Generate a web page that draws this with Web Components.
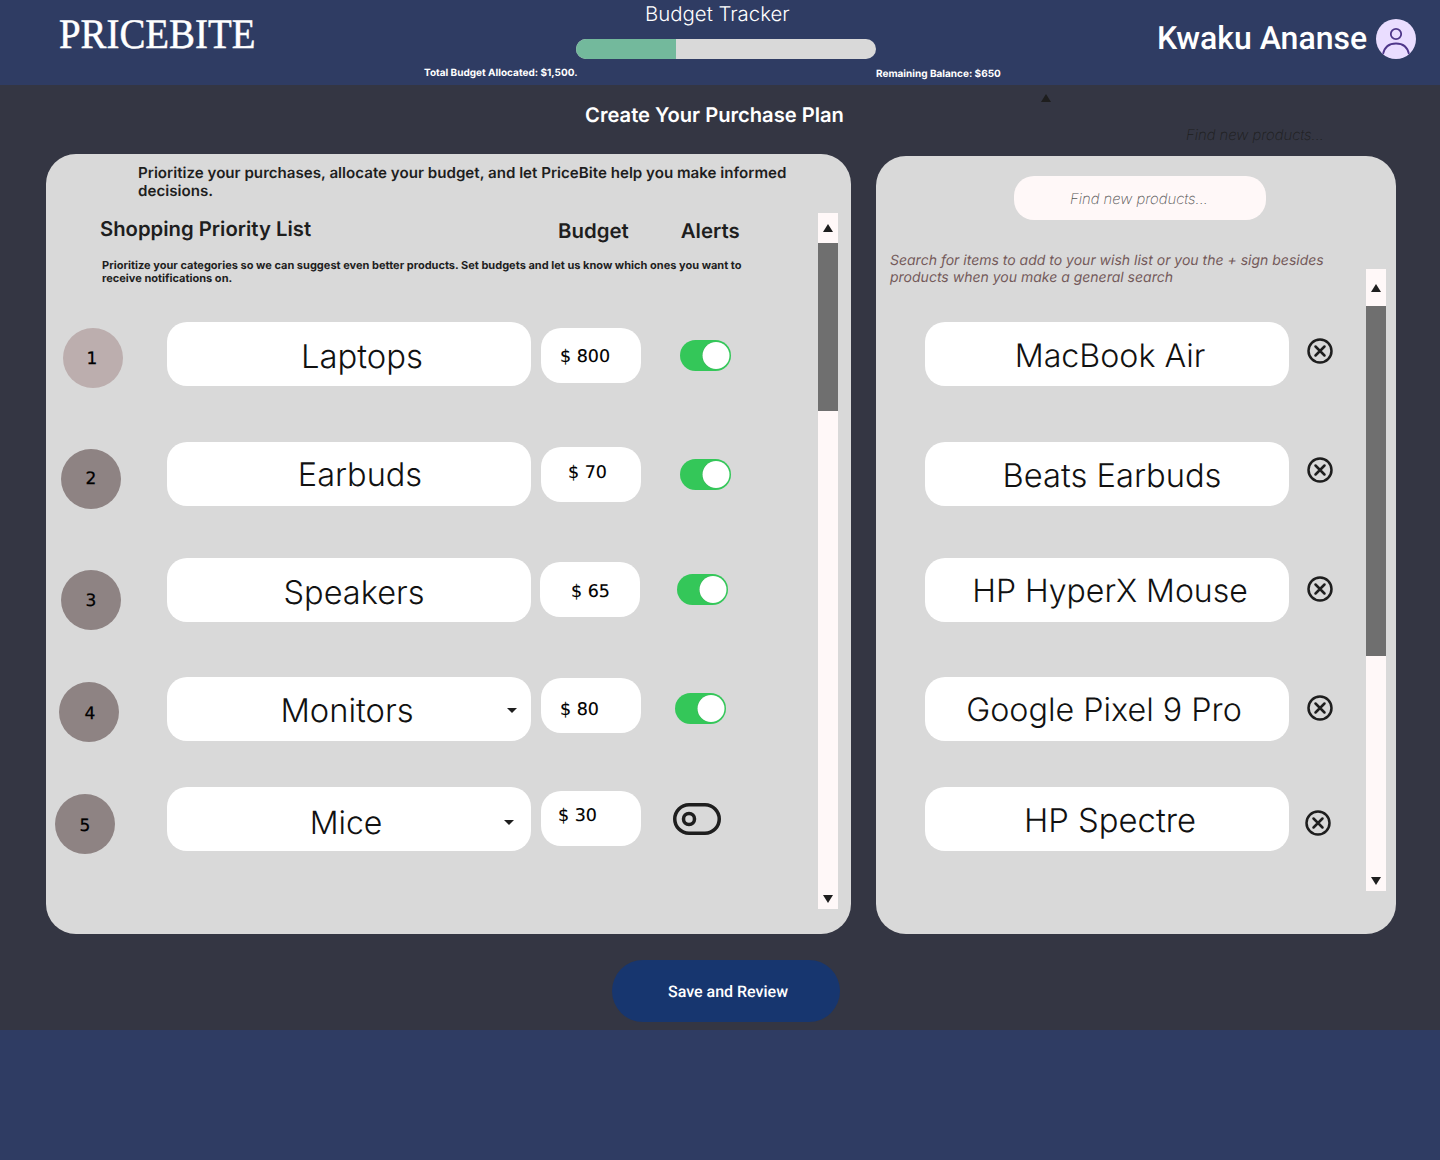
<!DOCTYPE html>
<html lang="en">
<head>
<meta charset="utf-8">
<title>PriceBite</title>
<style>
html,body{margin:0;padding:0;background:#2f3c63;font-family:Inter,"Liberation Sans",sans-serif;text-rendering:geometricPrecision;}
body{width:1440px;height:1160px;overflow:hidden;}
</style>
</head>
<body>
<pb-app>
  <pb-header slot="header"></pb-header>
  <pb-priority-card slot="left">
    <pb-priority-row rank="1" tone="light" amount="$ 800" fs="32.8" cx="17" cy="6" nx="-1" ny="1" tx="13" ty="2" bx="10" by="6" ax="39" ay="18" sw="on" gap="0" amt-pad="19" amt-y="1">Laptops</pb-priority-row>
    <pb-priority-row rank="2" amount="$ 70" fs="32.5" cx="15" cy="7" nx="0" ny="0" tx="11" ty="1" bx="10" by="5" ax="39" ay="17" sw="on" gap="56" amt-pad="27" amt-y="-2">Earbuds</pb-priority-row>
    <pb-priority-row rank="3" amount="$ 65" fs="32.5" cx="15" cy="12" nx="0" ny="1" tx="5" ty="3" bx="9" by="4" ax="37" ay="16" sw="on" gap="52" amt-pad="31" amt-y="2">Speakers</pb-priority-row>
    <pb-priority-row rank="4" amount="$ 80" fs="32.7" cx="13" cy="5" nx="1" ny="2" tx="-2" ty="1" bx="10" by="1" ax="34" ay="16" sw="on" gap="55" amt-pad="19" amt-y="4" caret="340" caret-y="31">Monitors</pb-priority-row>
    <pb-priority-row rank="5" amount="$ 30" fs="32" cx="9" cy="7" nx="0" ny="2" tx="-3" ty="4" bx="10" by="4" ax="32" ay="16" sw="off" gap="46" amt-pad="17" amt-y="-3" caret="337" caret-y="33">Mice</pb-priority-row>
  </pb-priority-card>
  <pb-wish-card slot="right">
    <pb-wish-row gap="0" tx="3" ty="2" iy="16" ix="18" fs="32.2">MacBook Air</pb-wish-row>
    <pb-wish-row gap="56" tx="5" ty="1" iy="15" ix="18" fs="32.7">Beats Earbuds</pb-wish-row>
    <pb-wish-row gap="52" tx="3" ty="1" iy="18" ix="18" fs="32">HP HyperX Mouse</pb-wish-row>
    <pb-wish-row gap="55" tx="-3" ty="1" iy="18" ix="18" fs="32.3">Google Pixel 9 Pro</pb-wish-row>
    <pb-wish-row gap="46" tx="3" ty="1" iy="23" ix="16" fs="32.8">HP Spectre</pb-wish-row>
  </pb-wish-card>
</pb-app>
<script>
function def(name, css, html){
  customElements.define(name, class extends HTMLElement{
    connectedCallback(){
      if(this.shadowRoot) return;
      const r=this.attachShadow({mode:'open'});
      r.innerHTML='<style>'+css+'</style>'+(typeof html==='function'?html(this):html);
    }
  });
}
const TRI_UP='<svg width="10" height="8" viewBox="0 0 10 8"><path d="M5 0 10 8H0Z" fill="#1e1e1e"/></svg>';
const TRI_DOWN='<svg width="10" height="8" viewBox="0 0 10 8"><path d="M0 0H10L5 8Z" fill="#1e1e1e"/></svg>';
function shift(tx,ty){
  return (tx>=0?'padding-left:'+(tx*2):'padding-right:'+(-tx*2))+'px;'+(ty>=0?'padding-top:'+(ty*2):'padding-bottom:'+(-ty*2))+'px;';
}

def('pb-app',`
  :host{display:block;width:1440px;height:1160px;position:relative;}
  main{display:block;height:945px;background:#343643;box-sizing:border-box;padding-top:18px;}
  h1{margin:0 0 27px;font:600 20.160px/24px Inter,sans-serif;color:#fff;text-align:center;width:1429px;}
  .cards{display:flex;align-items:flex-start;gap:25px;padding-left:46px;}
  .save{display:flex;align-items:center;justify-content:center;box-sizing:border-box;width:228px;height:62px;margin:26px 0 0 612px;padding:2px 0 0 4px;border-radius:31px;background:#17366f;color:#fff;font:500 16px/20px Roboto,sans-serif;}
  .stray-tri{position:absolute;left:1041px;top:94px;line-height:0;}
  .stray-find{position:absolute;left:1186px;top:127px;font:italic 200 14.800px/17px Inter,sans-serif;color:#1e1e1e;}
`,`
  <slot name="header"></slot>
  <main>
    <h1>Create Your Purchase Plan</h1>
    <div class="cards"><slot name="left"></slot><slot name="right"></slot></div>
    <div class="save">Save and Review</div>
  </main>
  <div class="stray-tri">${TRI_UP}</div>
  <div class="stray-find">Find new products...</div>
`);

def('pb-header',`
  :host{display:flex;height:85px;background:#2f3c63;color:#fff;position:relative;}
  .logo{width:424px;box-sizing:border-box;padding:13px 0 0 59px;}
  .logo span{display:inline-block;font:400 42px/44px "Liberation Serif",serif;-webkit-text-stroke:.5px #fff;transform:scaleX(.925);transform-origin:0 50%;white-space:nowrap;}
  .tracker{width:733px;flex:none;display:grid;grid-template-columns:152px 300px 1fr;grid-template-rows:39px 20px auto;}
  .title{grid-column:1/4;padding-left:221px;font:300 20.400px/28px Inter,sans-serif;white-space:nowrap;}
  .bar{grid-column:2;grid-row:2;background:#d9d9d9;border-radius:10px;overflow:hidden;}
  .bar i{display:block;width:100px;height:100%;background:#73b99c;}
  .note{font:700 10px/12px Inter,sans-serif;white-space:nowrap;}
  .n1{grid-column:1/3;grid-row:3;margin-top:8px;}
  .n2{grid-column:3;grid-row:3;margin-top:9px;}
  .user{flex:1;display:flex;align-items:flex-start;gap:9px;padding-top:19px;}
  .user span{display:block;width:210px;font:500 32px/38px Roboto,sans-serif;white-space:nowrap;}
  svg{display:block;flex:none;}
`,`
  <div class="logo"><span>PRICEBITE</span></div>
  <div class="tracker">
    <div class="title">Budget Tracker</div>
    <div class="bar"><i></i></div>
    <div class="note n1">Total Budget Allocated: $1,500.</div>
    <div class="note n2">Remaining Balance: $650</div>
  </div>
  <div class="user"><span>Kwaku Ananse</span>
    <svg width="40" height="40" viewBox="0 0 40 40"><defs><clipPath id="c"><circle cx="20" cy="20" r="20"/></clipPath></defs>
      <circle cx="20" cy="20" r="20" fill="#eaddff"/>
      <g clip-path="url(#c)" fill="none" stroke="#4f378a" stroke-width="1.800"><circle cx="20" cy="15" r="5.200"/><path d="M7 35C8.500 28 13 24.500 20 24.500S31.500 28 33 35"/></g>
    </svg>
  </div>
`);

def('pb-rail',`
  :host{display:flex;flex-direction:column;align-items:center;width:20px;flex:none;background:#fff8f8;box-sizing:border-box;height:var(--h);margin-top:var(--top);}
  .up{height:var(--uph);flex:none;width:100%;display:flex;align-items:center;justify-content:center;}
  .thumb{width:100%;height:var(--th);flex:none;background:#6f6f6f;}
  .fill{flex:1;}
  .down{height:20px;flex:none;display:flex;align-items:center;justify-content:center;}
`,`<div class="up">${TRI_UP}</div><div class="thumb"></div><div class="fill"></div><div class="down">${TRI_DOWN}</div>`);

def('pb-priority-card',`
  :host{display:flex;width:805px;height:780px;flex:none;background:#d9d9d9;border-radius:30px;color:#1e1e1e;}
  .col{width:772px;flex:none;}
  .intro{margin:10px 0 0 92px;width:660px;font:600 15.140px/18px Inter,sans-serif;}
  .heads{display:flex;align-items:flex-start;margin:17px 0 0 54px;font:600 20.400px/24px Inter,sans-serif;white-space:nowrap;}
  .heads span:first-child{font-size:20.300px;}
  .heads .b{margin:2px 0 0 247px;}
  .heads .a{margin:2px 0 0 52px;}
  .small{margin:16px 0 37px 56px;width:650px;font:700 11.020px/13px Inter,sans-serif;}
  pb-rail{--h:696px;--top:59px;--uph:30px;--th:168px;}
`,`
  <div class="col">
    <div class="intro">Prioritize your purchases, allocate your budget, and let PriceBite help you make informed decisions.</div>
    <div class="heads"><span>Shopping Priority List</span><span class="b">Budget</span><span class="a">Alerts</span></div>
    <div class="small">Prioritize your categories so we can suggest even better products. Set budgets and let us know which ones you want to receive notifications on.</div>
    <slot></slot>
  </div>
  <pb-rail></pb-rail>
`);

def('pb-priority-row',`
  :host{display:flex;height:64px;align-items:flex-start;}
  .slotc{width:121px;flex:none;}
  .c{width:60px;height:60px;border-radius:50%;background:#8e8383;display:flex;align-items:center;justify-content:center;box-sizing:border-box;font:400 17px/20px "DejaVu Sans",sans-serif;-webkit-text-stroke:.25px #000;color:#000;}
  .c.light{background:#bcaeae;}
  .pill{width:364px;height:64px;flex:none;background:#fff;border-radius:20px;display:flex;align-items:center;justify-content:center;font-family:Inter,sans-serif;font-weight:350;line-height:40px;color:#111;box-sizing:border-box;position:relative;}
  .caret{position:absolute;width:0;height:0;border:5px solid transparent;border-top:5px solid #1e1e1e;border-bottom:0;}
  .b{width:100px;height:55px;flex:none;background:#fff;border-radius:20px;box-sizing:border-box;display:flex;align-items:center;font:400 17.500px/22px "DejaVu Sans",sans-serif;-webkit-text-stroke:.15px #000;color:#000;white-space:nowrap;}
  pb-switch{flex:none;}
`,h=>{
  const a=n=>h.getAttribute(n);
  h.style.marginTop=(a('gap')||0)+'px';
  const caret=a('caret')?`<i class="caret" style="left:${a('caret')}px;top:${a('caret-y')}px"></i>`:'';
  return `<div class="slotc"><div class="c ${a('tone')==='light'?'light':''}" style="margin:${a('cy')}px 0 0 ${a('cx')}px;${+a('nx')<0?'padding-right:'+(-a('nx')*2)+'px;':'padding-left:'+(a('nx')*2)+'px;'}padding-top:${a('ny')*2}px">${a('rank')}</div></div>
  <div class="pill" style="font-size:${a('fs')}px;${shift(+a('tx'),+a('ty'))}"><slot></slot>${caret}</div>
  <div class="b" style="margin:${a('by')}px 0 0 ${a('bx')}px;padding-left:${a('amt-pad')}px;${shift(0,+a('amt-y')).replace('padding-left:0px;','')}">${a('amount')}</div>
  <pb-switch state="${a('sw')}" style="margin:${a('ay')}px 0 0 ${a('ax')}px"></pb-switch>`;
});

def('pb-switch',`
  :host{display:block;line-height:0;}
  svg{display:block;}
`,h=>h.getAttribute('state')==='off'
  ?`<svg width="48" height="32" viewBox="0 0 48 32" fill="none" stroke="#1e1e1e" stroke-width="3.500"><rect x="1.750" y="1.750" width="44.500" height="28.500" rx="14.250"/><circle cx="16" cy="16" r="5.500"/></svg>`
  :`<svg width="51" height="31" viewBox="0 0 51 31"><rect width="51" height="31" rx="15.500" fill="#34c759"/><circle cx="35.500" cy="15.500" r="13.500" fill="#000" opacity=".12"/><circle cx="36" cy="15.500" r="13.500" fill="#fff"/></svg>`);

def('pb-wish-card',`
  :host{display:flex;width:520px;height:778px;flex:none;margin-top:2px;background:#d9d9d9;border-radius:30px;}
  .col{width:490px;flex:none;}
  .search{width:252px;height:44px;margin:20px 0 0 138px;padding:2px 0 0 56px;background:#fff8f8;border-radius:20px;display:flex;align-items:center;box-sizing:border-box;font:italic 200 14.800px/17px Inter,sans-serif;color:#555;white-space:nowrap;}
  .help{margin:32px 0 36px 14px;width:450px;font:italic 400 14px/17px Inter,sans-serif;color:#745a5a;}
  pb-rail{--h:622px;--top:113px;--uph:37px;--th:350px;}
`,`
  <div class="col">
    <div class="search">Find new products...</div>
    <div class="help">Search for items to add to your wish list or you the + sign besides products when you make a general search</div>
    <slot></slot>
  </div>
  <pb-rail></pb-rail>
`);

def('pb-wish-row',`
  :host{display:flex;height:64px;align-items:flex-start;padding-left:49px;}
  .pill{width:364px;height:64px;flex:none;background:#fff;border-radius:20px;display:flex;align-items:center;justify-content:center;box-sizing:border-box;font-family:Inter,sans-serif;font-weight:350;line-height:40px;color:#111;white-space:nowrap;}
  svg{display:block;flex:none;}
`,h=>{
  const a=n=>h.getAttribute(n);
  h.style.marginTop=(a('gap')||0)+'px';
  return `<div class="pill" style="font-size:${a('fs')}px;${shift(+a('tx'),+a('ty'))}"><slot></slot></div>
  <svg style="margin:${a('iy')}px 0 0 ${a('ix')}px" width="26" height="26" viewBox="0 0 26 26" fill="none" stroke="#1e1e1e" stroke-width="2.500" stroke-linecap="round"><circle cx="13" cy="13" r="11.500"/><path d="M8.500 8.500l9 9M17.500 8.500l-9 9"/></svg>`;
});
</script>
</body>
</html>
